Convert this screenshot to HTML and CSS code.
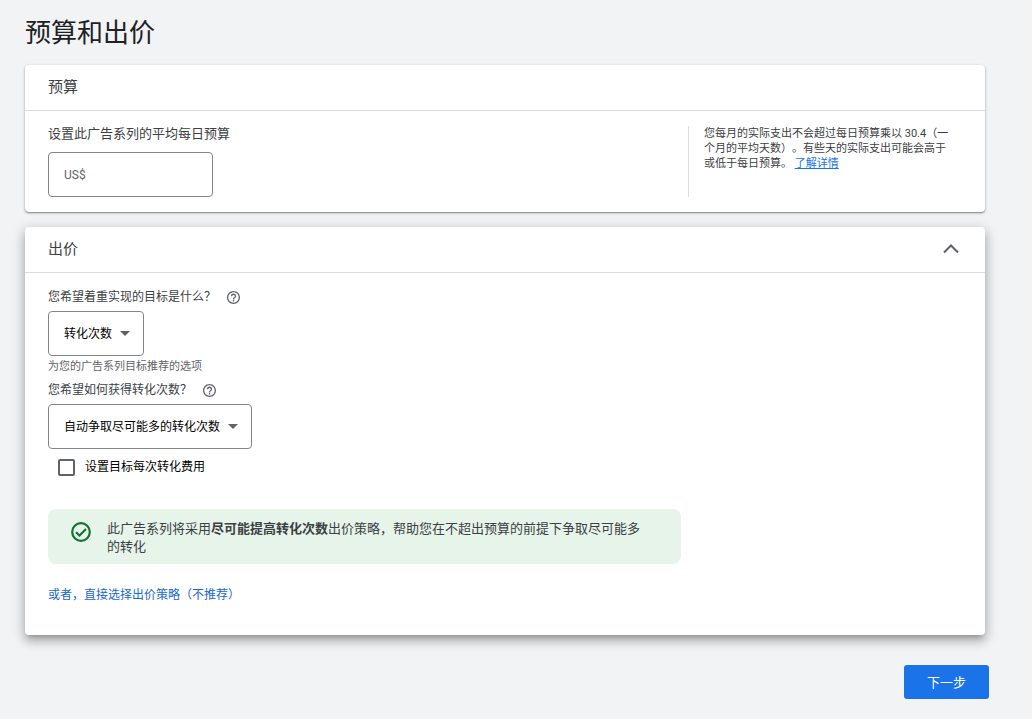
FILE: index.html
```html
<!DOCTYPE html>
<html lang="zh-CN">
<head>
    <meta charset="UTF-8">
    <meta name="viewport" content="width=device-width, initial-scale=1.0">
    <title>预算和出价</title>
    <link rel="stylesheet" href="styles.css">
</head>
<body>
    <main class="page">
        <h1>预算和出价</h1>

        <section class="card">
            <div class="card-header">
                <h2>预算</h2>
            </div>
            <div class="card-body budget">
                <div class="budget-form">
                    <label class="budget-label" for="budget">设置此广告系列的平均每日预算</label>
                    <input class="budget-input" id="budget" type="text" placeholder="US$">
                </div>
                <p class="budget-help">您每月的实际支出不会超过每日预算乘以 30.4（一个月的平均天数）。有些天的实际支出可能会高于或低于每日预算。 <a href="#">了解详情</a></p>
            </div>
        </section>

        <section class="card card-active">
            <div class="card-header">
                <h2>出价</h2>
                <button class="icon-button" type="button" aria-label="收起">
                    <svg width="16" height="10" viewBox="0 0 16 10"><path d="M1 8.5 8 1.5l7 7" fill="none" stroke="#5f6368" stroke-width="2"/></svg>
                </button>
            </div>
            <div class="card-body bidding">
                <div class="question">
                    <label for="goal">您希望着重实现的目标是什么？</label>
                    <button class="icon-button" type="button" aria-label="帮助">
                        <svg width="13" height="13" viewBox="2 2 20 20"><path fill="#5f6368" d="M11 18h2v-2h-2v2zm1-16C6.48 2 2 6.48 2 12s4.48 10 10 10 10-4.48 10-10S17.52 2 12 2zm0 18c-4.41 0-8-3.59-8-8s3.59-8 8-8 8 3.59 8 8-3.59 8-8 8zm0-14c-2.21 0-4 1.79-4 4h2c0-1.1.9-2 2-2s2 .9 2 2c0 2-3 1.75-3 5h2c0-2.25 3-2.5 3-5 0-2.21-1.79-4-4-4z"/></svg>
                    </button>
                </div>
                <div class="select">
                    <select id="goal">
                        <option>转化次数</option>
                    </select>
                </div>
                <p class="hint">为您的广告系列目标推荐的选项</p>

                <div class="question">
                    <label for="method">您希望如何获得转化次数？</label>
                    <button class="icon-button" type="button" aria-label="帮助">
                        <svg width="13" height="13" viewBox="2 2 20 20"><path fill="#5f6368" d="M11 18h2v-2h-2v2zm1-16C6.48 2 2 6.48 2 12s4.48 10 10 10 10-4.48 10-10S17.52 2 12 2zm0 18c-4.41 0-8-3.59-8-8s3.59-8 8-8 8 3.59 8 8-3.59 8-8 8zm0-14c-2.21 0-4 1.79-4 4h2c0-1.1.9-2 2-2s2 .9 2 2c0 2-3 1.75-3 5h2c0-2.25 3-2.5 3-5 0-2.21-1.79-4-4-4z"/></svg>
                    </button>
                </div>
                <div class="select">
                    <select id="method">
                        <option>自动争取尽可能多的转化次数</option>
                    </select>
                </div>

                <label class="checkbox">
                    <input type="checkbox">
                    设置目标每次转化费用
                </label>

                <div class="notice">
                    <svg width="20" height="20" viewBox="2 2 20 20"><circle cx="12" cy="12" r="8.8" fill="none" stroke="#137333" stroke-width="2.2"/><path d="M7 12.2 10.500 15.500 17 9" fill="none" stroke="#137333" stroke-width="2.2"/></svg>
                    <p>此广告系列将采用<strong>尽可能提高转化次数</strong>出价策略，帮助您在不超出预算的前提下争取尽可能多的转化</p>
                </div>

                <a class="strategy-link" href="#">或者，直接选择出价策略（不推荐）</a>
            </div>
        </section>

        <div class="footer">
            <button class="next-button" type="button">下一步</button>
        </div>
    </main>
</body>
</html>
```
FILE: styles.css
```css
* {
    box-sizing: border-box;
}

body {
    margin: 0;
    background-color: #f1f3f4;
    color: #3c4043;
    font-family: Roboto, "Noto Sans CJK SC", sans-serif;
    font-size: 12px;
    line-height: 18px;
    text-spacing-trim: space-all;
}

h1, h2, p {
    margin: 0;
    font-weight: 400;
}

h1 {
    color: #202124;
    font-size: 26px;
    line-height: 34px;
    margin-bottom: 15px;
}

h2 {
    font-size: 15px;
    line-height: 20px;
}

button, input, select {
    font-family: inherit;
}

.page {
    padding: 16px 43px 20px 25px;
}

.card {
    margin: 0 4px 15px 0;
    background-color: #fff;
    border-radius: 4px;
    box-shadow: 0 1px 3px rgba(0, 0, 0, 0.3), 0 1px 1px rgba(0, 0, 0, 0.25);
}

.card-active {
    box-shadow: 0 5px 5px -3px rgba(0, 0, 0, 0.2), 0 6px 10px 1px rgba(0, 0, 0, 0.16), 0 3px 14px 2px rgba(0, 0, 0, 0.14);
}

.card-header {
    display: flex;
    align-items: center;
    justify-content: space-between;
    height: 46px;
    padding: 0 26px 2px 23px;
    border-bottom: 1px solid #dadce0;
}

.card-body {
    padding: 15px 23px;
}

.icon-button {
    display: flex;
    padding: 0;
    border: 0;
    background: none;
    cursor: pointer;
}

/* budget */
.budget {
    display: flex;
    justify-content: space-between;
}

.budget-label {
    display: block;
    margin-bottom: 10px;
    font-size: 13px;
    line-height: 16px;
}

.budget-input {
    display: block;
    width: 165px;
    height: 45px;
    padding: 0 15px;
    border: 1px solid #80868b;
    border-radius: 4px;
    font-size: 12px;
}

.budget-input::placeholder {
    color: #5f6368;
}

.budget-help {
    width: 274px;
    padding: 0 8px 0 15px;
    border-left: 1px solid #dadce0;
    font-size: 11px;
    line-height: 15px;
}

.budget-help a {
    color: #1a73e8;
}

/* bidding */
.bidding {
    padding-bottom: 31px;
}

.question {
    display: flex;
    align-items: center;
    gap: 11px;
    margin-bottom: 5px;
}

.select {
    position: relative;
    width: fit-content;
}

.select::after {
    content: "";
    position: absolute;
    top: 20px;
    right: 14px;
    border: 5px solid transparent;
    border-top-color: #5f6368;
    border-bottom: 0;
    pointer-events: none;
}

.select select {
    display: block;
    height: 45px;
    padding: 0 30px 0 15px;
    appearance: none;
    background-color: #fff;
    border: 1px solid #80868b;
    border-radius: 4px;
    color: #000;
    font-size: 12px;
}

.hint {
    margin: 1px 0 4px;
    color: #5f6368;
    font-size: 11px;
    line-height: 20px;
}

.checkbox {
    display: flex;
    align-items: center;
    gap: 10px;
    width: fit-content;
    height: 36px;
    margin-left: 10px;
    color: #000;
}

.checkbox input {
    width: 17px;
    height: 17px;
    margin: 0;
    appearance: none;
    border: 2px solid #5f6368;
    border-radius: 2px;
}

.checkbox input:checked {
    background-color: #1a73e8;
    border-color: #1a73e8;
}

.notice {
    display: flex;
    align-items: flex-start;
    gap: 16px;
    max-width: 633px;
    margin: 24px 0 22px;
    padding: 11px 32px 8px 23px;
    background-color: #e6f4ea;
    border-radius: 8px;
    font-size: 13px;
}

.notice svg {
    flex-shrink: 0;
    margin-top: 2px;
}

.notice strong {
    font-weight: 700;
}

.strategy-link {
    display: block;
    width: fit-content;
    color: #1967d2;
    text-decoration: none;
}

/* footer */
.footer {
    display: flex;
    justify-content: flex-end;
    padding-top: 15px;
}

.next-button {
    width: 85px;
    height: 34px;
    padding: 0 0 2px;
    border: 0;
    border-radius: 3px;
    background-color: #1a73e8;
    color: #fff;
    font-size: 13px;
    cursor: pointer;
}
```
